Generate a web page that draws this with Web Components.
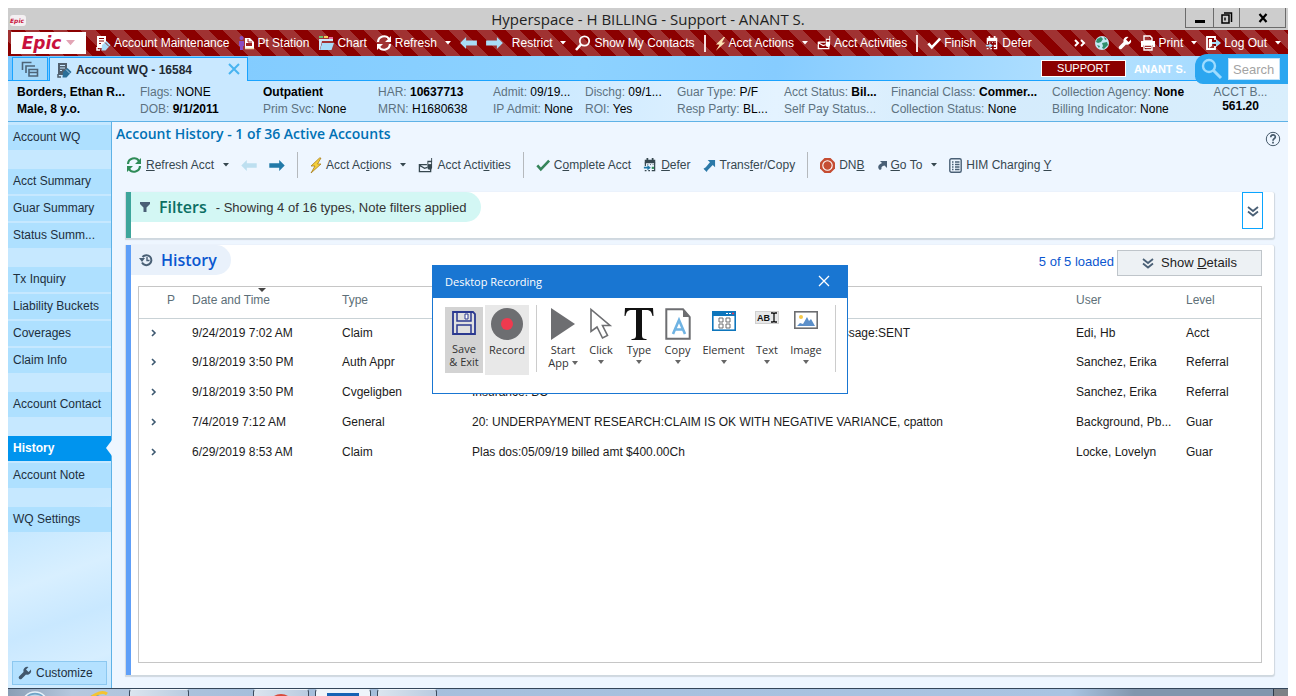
<!DOCTYPE html>
<html lang="en">
<head>
<meta charset="utf-8">
<title>Hyperspace - H BILLING - Support - ANANT S.</title>
<style>
  html, body { height: 100%; }
  body { margin: 0; background: #fff; font: 12px/16px "Liberation Sans", Arial, sans-serif; color: #1b1b1b; }
</style>
</head>
<body>
<hyper-space></hyper-space>
<script>
const define = (name, css, render) => customElements.define(name, class extends HTMLElement {
  connectedCallback() {
    if (this.shadowRoot) return;
    const t = document.createElement('template');
    t.innerHTML = `<style>*{box-sizing:border-box}:host{box-sizing:border-box}button{font:inherit;color:inherit;background:none;border:0;padding:0;margin:0}a{color:inherit;text-decoration:none}${css}</style>${render(this)}`;
    this.attachShadow({ mode: 'open' }).append(t.content.cloneNode(true));
  }
});

/* Icon set: [viewBox width, viewBox height, markup] */
const ICONS = {
  caret: [6, 4, '<path d="M0 0h6L3 3.500z" fill="currentColor"/>'],
  caretBig: [6, 4, '<path d="M0 0h6L3 4z" fill="currentColor"/>'],
  doc: [16, 16, '<path d="M2 1h9v7l-4 5H2z" fill="var(--a,#fff)"/><path d="M4 3.500h5M4 6h5M4 8.500h2" stroke="var(--c,#8b0000)"/><path d="M2 12v3h3" fill="none" stroke="var(--a,#fff)" stroke-width="1.500"/><path d="M7 10l4.500-4 4 4-5 5.500H6.500z" fill="var(--b,#a9dcf7)"/><path d="M10 7.500l4 4" stroke="var(--c,#8b0000)" stroke-width=".8"/>'],
  station: [16, 16, '<circle cx="3.500" cy="3" r="2" fill="#8a4cc0"/><path d="M1 6h5v5H5v4H2v-4H1z" fill="#8a4cc0"/><path d="M7 3h5l4 4v6H7z" fill="#fff"/><path d="M8 8h6v3H8z" fill="#a02020"/><path d="M10 4v3h4" fill="none" stroke="#a02020"/><path d="M7 13.500h9" stroke="#f0dcb0" stroke-width="1.500"/>'],
  folder: [16, 16, '<path d="M1 1h4v2H1z" fill="#6cc36c"/><path d="M6 1h4v2H6z" fill="#f5d060"/><path d="M11 2h4v2h-4z" fill="#e86a9a"/><path d="M1 4h14v2H4l-2 9H1z" fill="#cfe9fa"/><path d="M4 8h12l-2.500 7H2z" fill="#a8dcf8"/>'],
  refresh: [16, 16, '<g fill="none" stroke="currentColor" stroke-width="2.200"><path d="M2 7a6 6 0 0 1 11-3"/><path d="M14 9a6 6 0 0 1-11 3"/></g><path d="M15 1v6H9zM1 15V9h6z" fill="currentColor"/>'],
  left: [14, 10, '<path d="M0 5l5-5v3h9v4H5v3z" fill="currentColor"/>'],
  right: [14, 10, '<path d="M14 5L9 0v3H0v4h9v3z" fill="currentColor"/>'],
  search: [16, 16, '<circle cx="9.500" cy="6" r="4.700" fill="none" stroke="currentColor" stroke-width="1.800"/><path d="M6 9.500L1 15" stroke="currentColor" stroke-width="2.600"/>'],
  find: [22, 22, '<circle cx="8" cy="8" r="6" fill="none" stroke="currentColor" stroke-width="2.400"/><path d="M12.500 12.500L20 20" stroke="currentColor" stroke-width="3"/>'],
  bolt: [12, 16, '<path d="M9.500 1L1 9h4l-4 7 10-9H7.500L11 1z" fill="var(--a,#fbe3b4)" stroke="var(--b,none)" stroke-width=".8"/>'],
  activities: [16, 16, '<path d="M1.500 7h8M1.500 6.500v8h12v-4M2 8l5 3 3-1" fill="none" stroke="currentColor" stroke-width="1.400"/><path d="M10 3h5v7a2.500 2.500 0 0 1-5 0z" fill="currentColor"/><path d="M11 4.500h3v2h-3z" fill="var(--c,#8b0000)"/><path d="M14.500 0v4" stroke="currentColor"/>'],
  check: [16, 16, '<path d="M1.500 8.500l4 4.500L15 3" fill="none" stroke="currentColor" stroke-width="3"/>'],
  defer: [16, 16, '<path d="M2 2h12v4H2zM4 0h2v3H4zM10 0h2v3h-2z" fill="currentColor"/><path d="M2.700 5v4M13.300 5v9.300H10M2 14.300h2M6 14.300h2" stroke="currentColor" stroke-width="1.400" fill="none"/><path d="M5 7.500h1M8 7.500h1M11 7.500h1" stroke="currentColor"/><path d="M1 10h4V8l4 3-4 3v-2H1z" fill="var(--a,#a9dcf7)"/><path d="M10 10h2.500v2.500H10z" fill="var(--b,#fff)"/>'],
  more: [12, 8, '<path d="M1 1l3 3-3 3M7 1l3 3-3 3" fill="none" stroke="currentColor" stroke-width="2"/>'],
  globe: [16, 16, '<circle cx="8" cy="8" r="7" fill="#c5e9f5"/><path d="M3 4l4-2 2 2-2 3-3 1-2-1zM10 2l3 2-2 1zM8 8l5-1 1 3-4 4-2-1 1-2zM3 10l3 1-1 2z" fill="#2f8f6d"/>'],
  wrench: [14, 14, '<path d="M13 3.500L10.500 6 8 3.500 10.500 1a4 4 0 0 0-5 5L1 10.500A1.800 1.800 0 0 0 3.500 13L8 8.500a4 4 0 0 0 5-5z" fill="currentColor"/>'],
  print: [16, 16, '<path d="M4 1h6l2 2v3H4z" fill="none" stroke="currentColor" stroke-width="1.400"/><path d="M1 6h14v6h-2v-2H3v2H1z" fill="currentColor"/><path d="M4 10h8v5H4z" fill="none" stroke="currentColor" stroke-width="1.400"/><path d="M5 12.500h6" stroke="currentColor"/>'],
  logout: [16, 16, '<path d="M10 5V2H2v12h8v-3" fill="none" stroke="currentColor" stroke-width="1.800"/><path d="M4 4h3v7l-3 2z" fill="currentColor"/><path d="M7 7h4V4l5 4-5 4V9H7z" fill="#a9dcf7"/>'],
  windows: [18, 16, '<g fill="none" stroke="#4d6478" stroke-width="1.600"><path d="M1.500 9V1.500h9M5 12V5h9"/><path d="M8 8.500h8.500V15H8zM8 11.500h8.500"/></g>'],
  transfer: [14, 14, '<path d="M5 1h8v8l-2.500-2.500L5 12l-1 2-3.500-3.500L3 9l4.500-5.500z" fill="#2b79a8"/>'],
  dnb: [15, 15, '<path d="M4.500 0h6L15 4.500v6L10.500 15h-6L0 10.500v-6z" fill="#c54d33"/><circle cx="7.500" cy="7.500" r="4.700" fill="none" stroke="#fff" stroke-width="1.100"/>'],
  goto: [10, 10, '<path d="M3 1h7v7L7.500 5.500C5 6 4 7 4.500 9L3 10C0 8 1 4.500 5 3z" fill="#4a6076"/>'],
  him: [13, 15, '<rect x=".8" y=".8" width="11.400" height="13.400" rx="1.500" fill="none" stroke="#4a6076" stroke-width="1.400"/><path d="M3 4h1.500M6 4h4.500M3 6.500h1.500M6 6.500h4.500M3 9h1.500M6 9h4.500M3 11.500h1.500M6 11.500h4.500" stroke="#4a6076" stroke-width="1.400"/>'],
  help: [16, 16, '<circle cx="8" cy="8" r="6.700" fill="none" stroke="#465a6b"/><path d="M5.700 6.200c0-3 4.600-3 4.600-.3C10.300 7.600 8 7.800 8 9.700M8 10.800v1.700" fill="none" stroke="#465a6b" stroke-width="1.700"/>'],
  funnel: [12, 12, '<path d="M1 1h10v2L7.500 6.500V11h-3V6.500L1 3z" fill="#4a6076"/>'],
  history: [14, 14, '<path d="M3 9.500A5 5 0 1 0 3.500 4" fill="none" stroke="#4a6076" stroke-width="2"/><path d="M0 5h6L3 9z" fill="#4a6076"/><path d="M8 4v3.500h2.500" fill="none" stroke="#4a6076" stroke-width="1.400"/>'],
  dbl: [12, 12, '<path d="M1 2l5 4 5-4M1 6.500l5 4 5-4" fill="none" stroke="#4a6076" stroke-width="1.800"/>'],
  chev: [6, 8, '<path d="M1 1l3 3-3 3" fill="none" stroke="#3d5870" stroke-width="1.600"/>'],
  sort: [8, 4, '<path d="M0 0h8L4 4z" fill="#444"/>'],
  close: [10, 10, '<path d="M0 0l10 10M10 0L0 10" stroke="currentColor" stroke-width="var(--w,1.300)"/>'],
  save: [24, 24, '<path d="M1 1h20l2 2v20H1z" fill="#fff" fill-opacity=".3" stroke="#2b3990" stroke-width="1.800"/><path d="M5 1v9h14V1M5 23v-9h14v9M5 14h14" fill="none" stroke="#2b3990" stroke-width="1.500"/><path d="M13 3h3v5h-3z" fill="#fff" stroke="#2b3990"/>'],
  record: [32, 32, '<circle cx="16" cy="16" r="16" fill="#6d6e71"/><circle cx="16" cy="16" r="6" fill="#ef3a4f"/>'],
  play: [24, 32, '<path d="M0 0l24 16L0 32z" fill="#6d6e71"/>'],
  click: [24, 32, '<path d="M2 1.500v22l6-4.500 5.500 11 5-2.500-5-10h7.500z" fill="#fff" stroke="#6d6e71" stroke-width="1.600"/>'],
  type: [30, 32, '<path d="M1 0h28l.5 8h-1C27.500 3.500 26 2 22 2h-4v25c0 3 1 4 4.500 4v1h-15v-1C11 31 12 30 12 27V2H8C4 2 2.500 3.500 1.500 8h-1z" fill="#111"/>'],
  copy: [26, 32, '<path d="M1.300 1.300H18L24.700 9v21.700H1.300z" fill="#fff" stroke="#6d6e71" stroke-width="2"/><path d="M18 1v8h7z" fill="#6d6e71"/><path d="M8 26l6-14 6 14M10.500 21.500h7" fill="none" stroke="#6fb3e3" stroke-width="2.600"/>'],
  element: [24, 20, '<rect x=".8" y=".8" width="22.400" height="18.400" fill="#fff" stroke="#0e76bc" stroke-width="1.600"/><path d="M0 0h24v5H0z" fill="#0e76bc"/><path d="M14 2.500h2M17 2.500h2" stroke="#fff"/><path d="M20 2.500h2" stroke="#ef3a4f" stroke-width="1.500"/><path d="M7 7h4v4H7zM14 7h4v4h-4zM7 13h4v4H7zM14 13h4v4h-4z" fill="none" stroke="#6d6e71"/>'],
  text: [24, 13, '<rect x=".5" y=".5" width="23" height="12" fill="#e6e7e8" stroke="#d0d0d0"/><text x="2" y="10" font-family="Liberation Sans" font-weight="700" font-size="9" fill="#111">AB</text><path d="M16 2h2l1 .8 1-.8h2M16 11h2l1-.8 1 .8h2M19 2.500v8" fill="none" stroke="#111" stroke-width="1.300"/>'],
  image: [24, 18, '<rect x=".8" y=".8" width="22.400" height="16.400" fill="#fff" stroke="#6d6e71" stroke-width="1.600"/><circle cx="7" cy="6" r="2" fill="#f7c948"/><path d="M3 15l3-3 3 1 4-7 2 4 2-2 4 7z" fill="#5b8fc9"/>'],
  min: [16, 16, '<path d="M3 11.500h10" stroke="#000" stroke-width="3"/>'],
  restore: [16, 16, '<path d="M3 5h7v8H3zM5 3h7.500v9" fill="none" stroke="#000" stroke-width="1.500"/><path d="M6 7.500v3" stroke="#000" stroke-width="1.400"/>'],
  winclose: [16, 16, '<path d="M4.500 4l7 8M11.500 4l-7 8" stroke="#000" stroke-width="2.200"/>'],
  orb: [28, 28, '<circle cx="14" cy="14" r="13" fill="#6fa3c6" stroke="#e6f2fa" stroke-width="1.600"/><path d="M6 6q8-5 16 0v3H6z" fill="#b9d6ea"/>'],
  ie: [28, 28, '<circle cx="13" cy="15" r="9" fill="none" stroke="#3e8fd8" stroke-width="4"/><path d="M1 16C8 4 20-1 25 3" fill="none" stroke="#f4c430" stroke-width="3"/>'],
  explorer: [28, 28, '<path d="M6 4h14v20H6z" fill="#cdb98a"/>'],
  chrome: [28, 28, '<circle cx="14" cy="15" r="13" fill="#d9493a"/>'],
  blue: [32, 28, '<path d="M0 1h32v27H0z" fill="#1663b4"/>']
};
define('app-icon', `:host{display:inline-flex;flex:none}svg{display:block;overflow:visible}`, el => {
  const [w, h, body] = ICONS[el.getAttribute('name')];
  const k = Number(el.getAttribute('width') || w) / w;
  return `<svg width="${Math.round(w * k)}" height="${Math.round(h * k)}" viewBox="0 0 ${w} ${h}" aria-hidden="true">${body}</svg>`;
});
const icon = (name, width) => `<app-icon name="${name}"${width ? ` width="${width}"` : ''}></app-icon>`;

/* Toolbar button: icon, label, optional drop-down caret */
define('tool-button', `
  :host{display:inline-flex;flex:none}
  button{display:flex;align-items:center;gap:var(--tool-gap,3px);white-space:nowrap;line-height:16px}
  .caret{margin-left:5px;color:var(--caret,currentColor)}`, el => {
  const n = el.getAttribute('icon');
  return `<button type="button" aria-label="${el.getAttribute('label') || el.textContent}">${n ? icon(n, el.getAttribute('width')) : ''}<slot></slot>${el.hasAttribute('menu') ? `<app-icon class="caret" name="caret"></app-icon>` : ''}</button>`;
});
define('tool-separator', `:host{display:block;flex:none;width:2px;background:var(--sep,#f3dede)}`, () => '');

define('title-bar', `
  :host{display:flex;height:22px;background:#cdcdcd;align-items:center}
  .logo{flex:1;padding-left:2px}
  .logo span{display:inline-block;width:16px;background:#f4f0f2;border-radius:3px;color:#c8103c;font:italic bold 6px/11px "DejaVu Sans",sans-serif}
  h1{margin:0;font:15px/22px "Open Sans","Noto Sans",sans-serif;color:#222}
  .win{flex:1;display:flex;justify-content:flex-end;align-self:flex-start;padding-right:2px}
  .win button{height:20px;width:26px;border:1px solid #6b6b6b;border-top:0;border-right:0;display:flex;align-items:center;justify-content:center}
  .win button:first-child{width:28px}
  .win button:last-child{width:47px;border-right:1px solid #6b6b6b}`, () => `
  <div class="logo"><span>Epic</span></div>
  <h1>Hyperspace - H BILLING - Support - ANANT S.</h1>
  <div class="win"><button aria-label="Minimize">${icon('min')}</button><button aria-label="Restore">${icon('restore')}</button><button aria-label="Close">${icon('winclose')}</button></div>`);

define('main-menu', `
  :host{display:flex;align-items:center;gap:9px;height:26px;padding:0 7px 0 3px;color:#fff;
    background:repeating-linear-gradient(45deg,#8b0000 0 10px,#a03232 10px 20px)}
  .epic{width:75px;height:22px;background:#fff;display:flex;align-items:center;justify-content:center;gap:5px;color:#c8103c;font:italic bold 17px/22px "DejaVu Sans",sans-serif}
  .epic app-icon{color:#e2a5b5}
  .arrow{color:#a9dcf7;--tool-gap:0px}
  tool-separator{height:17px}
  .right{margin-left:auto;display:flex;gap:8px;align-items:center}`, () => `
  <button class="epic">Epic ${icon('caret', 9)}</button>
  <tool-button icon="doc">Account Maintenance</tool-button>
  <tool-button icon="station">Pt Station</tool-button>
  <tool-button icon="folder">Chart</tool-button>
  <tool-button icon="refresh" menu>Refresh</tool-button>
  <tool-button class="arrow" icon="left" label="Back" width="17"></tool-button>
  <tool-button class="arrow" icon="right" label="Forward" width="17"></tool-button>
  <tool-button menu>Restrict</tool-button>
  <tool-button icon="search">Show My Contacts</tool-button>
  <tool-separator></tool-separator>
  <tool-button icon="bolt" width="11" menu>Acct Actions</tool-button>
  <tool-button icon="activities" width="14">Acct Activities</tool-button>
  <tool-separator></tool-separator>
  <tool-button icon="check" width="14">Finish</tool-button>
  <tool-button icon="defer" width="14">Defer</tool-button>
  <div class="right">
    <tool-button icon="more" label="More"></tool-button>
    <tool-button icon="globe" label="Web"></tool-button>
    <tool-button icon="wrench" label="Personalize"></tool-button>
    <tool-button icon="print" menu>Print</tool-button>
    <tool-button icon="logout" menu>Log Out</tool-button>
  </div>`);

define('tab-strip', `
  :host{display:flex;align-items:flex-end;height:25px;padding-left:4px;gap:1px;position:relative;
    background:linear-gradient(100deg,#7cc8ff,#8dd2ff 45%,#86ccff 60%,#b4e1ff 85%,#9bd6ff);box-shadow:inset 0 -1px #1aa3ff}
  .tab{height:24px;border:1px solid #1aa3ff;display:flex;align-items:center}
  .list{width:36px;padding-left:8px;background:#a5d9fb}
  .active{width:199px;padding:0 8px 0 6px;gap:4px;background:#c9e8ff;border-bottom:0;font-weight:bold;color:#1f2a33;--a:#52606e;--b:#2b6f98;--c:#c9e8ff}
  .active .x{margin-left:auto;color:#49b4f0;--w:2}
  .who{margin-left:auto;display:flex;align-items:center;gap:8px;align-self:center;margin-right:102px;color:#fff;font-size:11px}
  .badge{width:85px;height:17px;line-height:15px;text-align:center;background:#8b0000;border:1px solid #fff}
  label{position:absolute;right:0;top:-2px;width:93px;height:30px;border-radius:12px 0 0 8px;background:#2ba6f0;display:flex;align-items:center;gap:5px;padding-left:6px;color:#9edcff}
  input{width:52px;height:22px;border:1px solid #bfe3fb;background:#fff;padding:0 4px;font:13px/18px "Liberation Sans",sans-serif}
  input::placeholder{color:#a3a3a3;opacity:1}`, () => `
  <button class="tab list" aria-label="All tabs">${icon('windows')}</button>
  <div class="tab active">${icon('doc', 16)}<span>Account WQ - 16584</span><button class="x" aria-label="Close tab">${icon('close')}</button></div>
  <div class="who"><span class="badge">SUPPORT</span><b>ANANT S.</b></div>
  <label aria-label="Search">${icon('find')}<input type="text" placeholder="Search"></label>`);

define('patient-header', `
  :host{display:grid;grid-template-columns:123fr 123fr 115fr 115fr 92fr 92fr 107fr 107fr 161fr 161fr 55fr;height:40px;align-content:center;
    padding:0 20px 0 9px;background:linear-gradient(95deg,#c9e8ff 40%,#e4f3ff 60%,#d4ebfc 75%,#d9eefc);color:#5d7280}
  p{margin:0;line-height:17px;white-space:nowrap;min-width:0}
  b,i{color:#000;font-style:normal}
  .bal{text-align:center;padding-top:1px}
  .bal p{line-height:14px}`, () => [
    ['<b>Borders, Ethan R...</b>', '<b>Male, 8 y.o.</b>'],
    ['Flags: <i>NONE</i>', 'DOB: <b>9/1/2011</b>'],
    ['<b>Outpatient</b>', 'Prim Svc: <i>None</i>'],
    ['HAR: <b>10637713</b>', 'MRN: <i>H1680638</i>'],
    ['Admit: <i>09/19...</i>', 'IP Admit: <i>None</i>'],
    ['Dischg: <i>09/1...</i>', 'ROI: <i>Yes</i>'],
    ['Guar Type: <i>P/F</i>', 'Resp Party: <i>BL...</i>'],
    ['Acct Status: <b>Bil...</b>', 'Self Pay Status...'],
    ['Financial Class: <b>Commer...</b>', 'Collection Status: <i>None</i>'],
    ['Collection Agency: <b>None</b>', 'Billing Indicator: <i>None</i>'],
    ['ACCT B...', '<b>561.20</b>']
  ].map(([a, b], i) => `<div class="${i === 10 ? 'bal' : ''}"><p>${a}</p><p>${b}</p></div>`).join(''));

define('nav-link', `
  :host{display:block}
  a{display:block;height:25px;line-height:25px;padding-left:5px;background:#aee0ff;color:#1d2f3d}
  :host([current]){position:relative}
  :host([current]) a{background:#0094ee;color:#fff;font-weight:bold}
  :host([current]) a::after{content:"";position:absolute;right:-1px;top:4px;border:8px solid transparent;border-left:0;border-right:6px solid #eef6ff}`,
  () => `<a href="#"><slot></slot></a>`);
define('side-nav', `
  :host{display:flex;flex-direction:column;width:104px;flex:none;padding-top:3px;border-right:1px solid #5fb2e6;
    background:linear-gradient(160deg,transparent 68%,#d8efff 78%,#c9e8ff 86%,#d6eeff 94%,transparent),#c6e8ff}
  nav{display:flex;flex-direction:column;gap:19px}
  nav div{display:flex;flex-direction:column;gap:2px}
  .custom{margin:auto 4px 3px;height:24px;background:#b4e1ff;border:1px solid #8cc8f0;display:flex;align-items:center;gap:4px;padding-left:5px;color:#1d2f3d}
  .custom app-icon{color:#41566b}`, () => `
  <nav>${[['Account WQ'], ['Acct Summary', 'Guar Summary', 'Status Summ...'], ['Tx Inquiry', 'Liability Buckets', 'Coverages', 'Claim Info'], ['Account Contact'], ['History', 'Account Note'], ['WQ Settings']]
    .map(g => `<div>${g.map(n => `<nav-link${n === 'History' ? ' current' : ''}>${n}</nav-link>`).join('')}</div>`).join('')}</nav>
  <button class="custom">${icon('wrench')}Customize</button>`);

define('activity-bar', `
  :host{display:flex;align-items:center;gap:12px;height:26px;color:#36474f;--caret:#36474f;--tool-gap:4px;--sep:#b5b9bd;--c:#eef6ff}
  tool-separator{height:26px;width:1px}
  .refresh{color:#2e8b57}.refresh span,.check span{color:#36474f}
  .check{color:#35855a}
  .dim{color:#bddff0}.blue{color:#2179a8}
  .bolt{--a:#f5cf3a;--b:#a87f1d}
  .defer{--a:#2179a8;--b:#2e8b57}`, () => `
  <tool-button class="refresh" icon="refresh" menu><span><u>R</u>efresh Acct</span></tool-button>
  <tool-button class="dim" icon="left" label="Previous" width="16"></tool-button>
  <tool-button class="blue" icon="right" label="Next" width="16"></tool-button>
  <tool-separator></tool-separator>
  <tool-button class="bolt" icon="bolt" menu><span>Acct Ac<u>t</u>ions</span></tool-button>
  <tool-button icon="activities" width="15"><span>Acct Acti<u>v</u>ities</span></tool-button>
  <tool-separator></tool-separator>
  <tool-button class="check" icon="check" width="14"><span>C<u>o</u>mplete Acct</span></tool-button>
  <tool-button class="defer" icon="defer" width="14"><span><u>D</u>efer</span></tool-button>
  <tool-button icon="transfer" width="13"><span>Trans<u>f</u>er/Copy</span></tool-button>
  <tool-separator></tool-separator>
  <tool-button icon="dnb"><span>DN<u>B</u></span></tool-button>
  <tool-button icon="goto" menu><span><u>G</u>o To</span></tool-button>
  <tool-button icon="him"><span>HIM Charging <u>Y</u></span></tool-button>`);

define('section-card', `
  :host{display:block;background:#fff;border-left:5px solid var(--accent);box-shadow:0 1px 1px 1px #cfd8df;border-radius:0 2px 2px 0}
  header{display:flex;align-items:flex-start;height:30px}
  .pill{display:flex;align-items:center;gap:8px;height:30px;padding:0 14px 0 8px;border-radius:0 15px 15px 0;background:var(--pill)}
  h2{margin:0;font:600 16px/28px "Open Sans","Noto Sans",sans-serif;color:var(--title)}
  .tools{margin-left:auto;display:flex}
  slot[name=note]::slotted(*){margin:2px 1px 0}`, el => `
  <header><div class="pill">${icon(el.getAttribute('icon'))}<h2>${el.getAttribute('heading')}</h2><slot name="note"></slot></div><div class="tools"><slot name="tools"></slot></div></header>
  <slot></slot>`);

define('history-table', `
  :host{display:block;border:1px solid #c6c6c6;background:#fff}
  table{width:100%;border-collapse:collapse;table-layout:fixed}
  th{height:31px;text-align:left;font-weight:normal;color:#5d6f78;border-bottom:1px solid #c9d2d6;padding:0 0 4px;position:relative}
  td{height:30px;padding:0;white-space:nowrap;color:#1b1b1b}
  tr:first-child td{height:29px}
  td:first-child{padding-left:12px}
  td:first-child button{display:block}
  .sort{position:absolute;left:66px;top:1px}
  .lead{display:inline-block;width:354px}`, () => `
  <table>
    <colgroup><col style="width:28px"><col style="width:25px"><col style="width:150px"><col style="width:130px"><col><col style="width:110px"><col style="width:75px"></colgroup>
    <thead><tr><th></th><th>P</th><th>Date and Time<app-icon class="sort" name="sort"></app-icon></th><th>Type</th><th></th><th>User</th><th>Level</th></tr></thead>
    <tbody>${[
      ['9/24/2019 7:02 AM', 'Claim', '<span class="lead"></span>Message:SENT', 'Edi, Hb', 'Acct'],
      ['9/18/2019 3:50 PM', 'Auth Appr', '', 'Sanchez, Erika', 'Referral'],
      ['9/18/2019 3:50 PM', 'Cvgeligben', 'Insurance: BC', 'Sanchez, Erika', 'Referral'],
      ['7/4/2019 7:12 AM', 'General', '20: UNDERPAYMENT RESEARCH:CLAIM IS OK WITH NEGATIVE VARIANCE, cpatton', 'Background, Pb...', 'Guar'],
      ['6/29/2019 8:53 AM', 'Claim', 'Plas dos:05/09/19 billed amt $400.00Ch', 'Locke, Lovelyn', 'Guar']
    ].map(r => `<tr><td><button aria-label="Expand row">${icon('chev')}</button></td><td></td>${r.map(c => `<td>${c}</td>`).join('')}</tr>`).join('')}</tbody>
  </table>`);

define('account-history', `
  :host{display:flex;flex-direction:column;flex:1;min-width:0;background:#eef6ff;padding:0 14px 13px}
  .head{display:flex;justify-content:space-between;align-items:flex-end;height:30px;margin:0 -7px 0 -10px}
  .head button{height:22px}
  h1{margin:0;font:600 14px/24px "Open Sans","Noto Sans",sans-serif;color:#0071b5;align-self:flex-start}
  activity-bar{margin-bottom:14px;flex:none}
  .filters{--accent:#3da59b;--pill:#d3f7f4;--title:#0b6e63;height:46px;margin-bottom:7px;flex:none}
  .history{--accent:#5f9ff8;--pill:#e9f1fb;--title:#0b57d0;flex:1;display:flex;flex-direction:column}
  .note{font-size:13px;color:#333}
  .loaded{font-size:13px;line-height:34px;color:#0b57d0;margin-right:3px}
  .expand{width:21px;height:37px;border:1px solid #0aa5ff;background:#fff;display:flex;align-items:center;justify-content:center;margin-right:11px}
  .details{width:145px;height:26px;margin:5px 12px 0 0;background:#edf1f4;border:1px solid #bfc5ca;display:flex;align-items:center;justify-content:center;gap:7px;font-size:13px;color:#222}
  history-table{flex:1;margin:11px 12px 12px 7px}`, () => `
  <div class="head"><h1>Account History - 1 of 36 Active Accounts</h1><button aria-label="Help">${icon('help')}</button></div>
  <activity-bar></activity-bar>
  <section-card class="filters" icon="funnel" heading="Filters">
    <span class="note" slot="note">- Showing 4 of 16 types, Note filters applied</span>
    <button class="expand" slot="tools" aria-label="Expand filters">${icon('dbl')}</button>
  </section-card>
  <section-card class="history" icon="history" heading="History">
    <span class="loaded" slot="tools">5 of 5 loaded</span>
    <button class="details" slot="tools">${icon('dbl')}<span>Show <u>D</u>etails</span></button>
    <history-table></history-table>
  </section-card>`);

define('record-tool', `
  :host{display:block;flex:none}
  button{display:flex;flex-direction:column;align-items:center;width:100%;height:100%;font:11px/13px "Open Sans","Noto Sans",sans-serif;color:#333;text-align:center}
  .pic{height:var(--pic,35px);display:flex;align-items:flex-start}
  .pic.mid{padding-top:3px}
  .caret{margin-top:4px}
  .row{display:flex;align-items:center;gap:3px}
  .row app-icon,.caret{color:#666}`, el => {
  const l = el.getAttribute('label').split('|');
  const m = el.hasAttribute('menu');
  const last = l.length - 1;
  return `<button type="button"><span class="pic ${el.getAttribute('fit') || ''}">${icon(el.getAttribute('icon'))}</span>${l.map((t, i) => `<span class="row">${t}${m && last && i === last ? icon('caretBig') : ''}</span>`).join('')}${m && !last ? `<app-icon class="caret" name="caretBig"></app-icon>` : ''}</button>`;
});
define('recording-window', `
  :host{display:block;width:416px;height:129px;background:#fff;border:1px solid #1976d2}
  header{height:32px;background:#1976d2;color:#fff;display:flex;align-items:center;justify-content:space-between;padding:0 18px 0 12px;font:11px/16px "Open Sans","Noto Sans",sans-serif}
  .tools{display:flex;padding:7px 12px 0}
  record-tool{padding-top:3px;height:69px}
  .save{background:#d3d3d3;width:38px;height:66px;margin:2px 2px 0 0;padding-top:4px;--pic:31px}
  .rec{background:#e8e8e8;width:44px;height:70px;margin-right:7px}
  tool-separator{--sep:#ccc;width:1px;height:67px}`, () => `
  <header><span>Desktop Recording</span><button aria-label="Close">${icon('close')}</button></header>
  <div class="tools">
    <record-tool class="save" icon="save" label="Save|&amp; Exit"></record-tool>
    <record-tool class="rec" icon="record" label="Record"></record-tool>
    <tool-separator></tool-separator>
    <record-tool style="width:52px" icon="play" label="Start|App" menu></record-tool>
    <record-tool style="width:24px" icon="click" label="Click" menu></record-tool>
    <record-tool style="width:52px" icon="type" label="Type" menu></record-tool>
    <record-tool style="width:25px" icon="copy" label="Copy" menu></record-tool>
    <record-tool style="width:67px" icon="element" fit="mid" label="Element" menu></record-tool>
    <record-tool style="width:20px" icon="text" fit="mid" label="Text" menu></record-tool>
    <record-tool style="width:58px" icon="image" fit="mid" label="Image" menu></record-tool>
    <tool-separator></tool-separator>
  </div>`);

define('task-bar', `
  :host{display:flex;height:8px;overflow:hidden;border-top:1px solid #34465a;
    background:linear-gradient(90deg,#8a9eb5,#b5c8de 5%,#a5bedb 20%,#a9c4e2 83%,#8296ad 88%)}
  button{height:30px;display:flex;justify-content:center;align-items:flex-start;padding-top:2px;flex:none}
  .orb{width:54px}.ie{width:67px}
  .app{width:60px;background:linear-gradient(90deg,#dbe5ef,#b9cbe0);border:1px solid #3c4c5e;border-top-color:#eef4fa;border-radius:3px}
  .a{margin-right:64px}.b{width:56px;margin-right:6px}.c{width:56px;margin-right:6px;background:#eef4fa}
  .desk{width:15px;margin-left:auto;background:#7d8186;border-left:1px solid #2e3b49}`, () => `
  <button class="orb" aria-label="Start">${icon('orb')}</button><button class="ie" aria-label="Browser">${icon('ie')}</button>
  <button class="app a" aria-label="Files">${icon('explorer')}</button><button class="app b" aria-label="Web browser">${icon('chrome')}</button>
  <button class="app c" aria-label="Recorder">${icon('blue')}</button><button class="app" aria-label="Hyperspace"></button>
  <button class="desk" aria-label="Show desktop"></button>`);

define('hyper-space', `
  :host{display:flex;flex-direction:column;min-height:100%;padding:8px 8px 0}
  .work{display:flex;flex:1;border-top:1px solid #5fb2e6}
  recording-window{position:absolute;left:calc(100% / 3);top:265px}`, () => `
  <title-bar></title-bar><main-menu></main-menu><tab-strip></tab-strip><patient-header></patient-header>
  <div class="work"><side-nav></side-nav><account-history></account-history></div>
  <task-bar></task-bar>
  <recording-window></recording-window>`);
</script>
</body>
</html>
